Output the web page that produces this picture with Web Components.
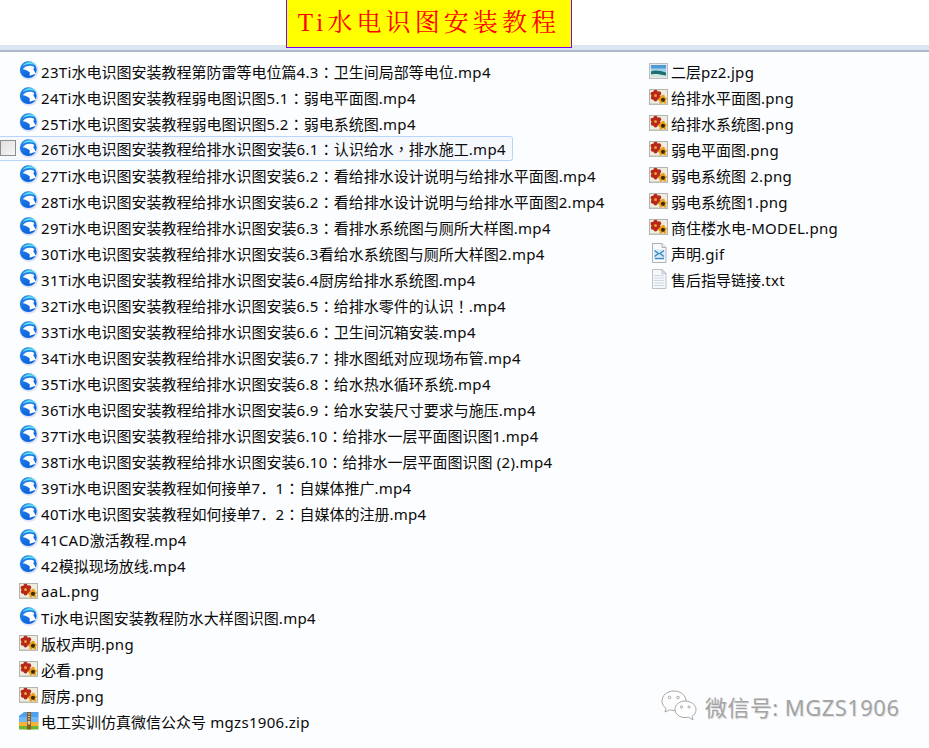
<!DOCTYPE html>
<html lang="zh"><head><meta charset="utf-8"><style>
html,body{margin:0;padding:0;background:#fcfdfe}
body{width:929px;height:748px;overflow:hidden;font-family:"Noto Sans","Noto Sans CJK SC",sans-serif}
.l{letter-spacing:.3px}
.p{font-family:"Noto Sans CJK TC",sans-serif}
</style></head><body>
<disk-page>
<title-bar slot="head">Ti水电识图安装教程</title-bar>
<file-row slot="left" type="video">23Ti水电识图安装教程第防雷等电位篇4.3：卫生间局部等电位.mp4</file-row>
<file-row slot="left" type="video">24Ti水电识图安装教程弱电图识图5.1：弱电平面图.mp4</file-row>
<file-row slot="left" type="video">25Ti水电识图安装教程弱电图识图5.2：弱电系统图.mp4</file-row>
<file-row slot="left" type="video" hover>26Ti水电识图安装教程给排水识图安装6.1：认识给水，排水施工.mp4</file-row>
<file-row slot="left" type="video">27Ti水电识图安装教程给排水识图安装6.2：看给排水设计说明与给排水平面图.mp4</file-row>
<file-row slot="left" type="video">28Ti水电识图安装教程给排水识图安装6.2：看给排水设计说明与给排水平面图2.mp4</file-row>
<file-row slot="left" type="video">29Ti水电识图安装教程给排水识图安装6.3：看排水系统图与厕所大样图.mp4</file-row>
<file-row slot="left" type="video">30Ti水电识图安装教程给排水识图安装6.3看给水系统图与厕所大样图2.mp4</file-row>
<file-row slot="left" type="video">31Ti水电识图安装教程给排水识图安装6.4厨房给排水系统图.mp4</file-row>
<file-row slot="left" type="video">32Ti水电识图安装教程给排水识图安装6.5：给排水零件的认识！.mp4</file-row>
<file-row slot="left" type="video">33Ti水电识图安装教程给排水识图安装6.6：卫生间沉箱安装.mp4</file-row>
<file-row slot="left" type="video">34Ti水电识图安装教程给排水识图安装6.7：排水图纸对应现场布管.mp4</file-row>
<file-row slot="left" type="video">35Ti水电识图安装教程给排水识图安装6.8：给水热水循环系统.mp4</file-row>
<file-row slot="left" type="video">36Ti水电识图安装教程给排水识图安装6.9：给水安装尺寸要求与施压.mp4</file-row>
<file-row slot="left" type="video">37Ti水电识图安装教程给排水识图安装6.10：给排水一层平面图识图1.mp4</file-row>
<file-row slot="left" type="video">38Ti水电识图安装教程给排水识图安装6.10：给排水一层平面图识图 (2).mp4</file-row>
<file-row slot="left" type="video">39Ti水电识图安装教程如何接单7．1：自媒体推广.mp4</file-row>
<file-row slot="left" type="video">40Ti水电识图安装教程如何接单7．2：自媒体的注册.mp4</file-row>
<file-row slot="left" type="video">41CAD激活教程.mp4</file-row>
<file-row slot="left" type="video">42模拟现场放线.mp4</file-row>
<file-row slot="left" type="png">aaL.png</file-row>
<file-row slot="left" type="video">Ti水电识图安装教程防水大样图识图.mp4</file-row>
<file-row slot="left" type="png">版权声明.png</file-row>
<file-row slot="left" type="png">必看.png</file-row>
<file-row slot="left" type="png">厨房.png</file-row>
<file-row slot="left" type="zip">电工实训仿真微信公众号 mgzs1906.zip</file-row>
<file-row slot="right" type="jpg">二层pz2.jpg</file-row>
<file-row slot="right" type="png">给排水平面图.png</file-row>
<file-row slot="right" type="png">给排水系统图.png</file-row>
<file-row slot="right" type="png">弱电平面图.png</file-row>
<file-row slot="right" type="png">弱电系统图 2.png</file-row>
<file-row slot="right" type="png">弱电系统图1.png</file-row>
<file-row slot="right" type="png">商住楼水电-MODEL.png</file-row>
<file-row slot="right" type="gif">声明.gif</file-row>
<file-row slot="right" type="txt">售后指导链接.txt</file-row>
<wx-mark slot="mark">微信号: MGZS1906</wx-mark>
</disk-page>
<script>
let gid=0;
const flower=`<g fill="#b8281a"><circle cx="6.500" cy="5" r="2.200"/><circle cx="3.500" cy="6.800" r="2"/><circle cx="10" cy="6.500" r="2.200"/><circle cx="3.800" cy="10.800" r="2"/><circle cx="9.500" cy="10.500" r="2.200"/><circle cx="6.500" cy="12.600" r="2"/><circle cx="6.500" cy="8.500" r="4"/></g><circle cx="6.500" cy="8.500" r="1.500" fill="#e8a030"/><g fill="#eda012"><circle cx="14" cy="9.800" r="2"/><circle cx="11.300" cy="12.300" r="2"/><circle cx="16.200" cy="12" r="1.700"/><circle cx="12" cy="15" r="1.600"/><circle cx="15.800" cy="15" r="1.600"/></g><circle cx="14" cy="12.800" r="2.100" fill="#3e2a08"/>`;
const ICONS={
video:()=>{const i="v"+(gid++);return `<svg width="20" height="20" viewBox="0 0 20 20"><defs><linearGradient id="${i}" x1="0" y1="0" x2=".4" y2="1"><stop offset="0" stop-color="#2f8ff0"/><stop offset="1" stop-color="#0a62dc"/></linearGradient></defs><circle cx="10" cy="9.500" r="9.500" fill="#dbe3f5"/><circle cx="9.300" cy="8.700" r="8.400" fill="url(#${i})"/><path d="M3.500 5C6 .8 12 0 16 3c.8.700 1.300 1.300 1.500 2.300C14 2.300 8 2.200 3.500 5Z" fill="#5fe3ea"/><path d="M3.800 8.200C6.500 4.200 12 3.700 15.300 6L14.300 8.300 17 12.700 10.600 14.700 10.800 11.500C9 9.400 6.200 8.500 3.800 8.200Z" fill="#fff"/></svg>`},
png:()=>`<svg width="20" height="20" viewBox="0 0 20 20"><rect x=".5" y="2.500" width="18" height="15" fill="#eeeddf" stroke="#b4b4ae"/><rect x="1" y="16.500" width="17" height="1.500" fill="#bdbdb4"/>${flower}</svg>`,
jpg:()=>`<svg width="20" height="20" viewBox="0 0 20 20"><rect x=".5" y="2.500" width="18" height="15" fill="#e6e8ea" stroke="#b9bcc0"/><rect x="2" y="4" width="15" height="12" fill="#9fd2ee"/><rect x="2" y="4" width="15" height="3.500" fill="#4f9ad0"/><path d="M2 10.500c4-2 9-1 15 1V16H2z" fill="#1e6f72"/><path d="M2 13.500c5-1 9 0 15 1V16H2z" fill="#cfe6e0"/></svg>`,
gif:()=>`<svg width="20" height="20" viewBox="0 0 20 20"><path d="M3.500 .5H13l4 4V19.500H3.500Z" fill="#f8fafc" stroke="#a9b2bc"/><path d="M13 .5V4.500H17" fill="#e4e9ef" stroke="#a9b2bc"/><rect x="5" y="6.500" width="10.500" height="10" fill="#d6e8f6"/><path d="M5.500 7.500l4 3-4 3M15 7.500l-4 3 4 3" fill="none" stroke="#3c8ac4" stroke-width="1.400"/><path d="M6 15.500h9" stroke="#3c8ac4" stroke-width="1.400"/></svg>`,
txt:()=>`<svg width="20" height="20" viewBox="0 0 20 20"><path d="M3.500 .5H13l4 4V19.500H3.500Z" fill="#f6f7f9" stroke="#bcc2ca"/><path d="M13 .5V4.500H17Z" fill="#dfe3e8" stroke="#bcc2ca"/><path d="M5 6.500h10M5 9h10M5 11.500h10M5 14h10M5 16.500h10" stroke="#ccd8e6"/></svg>`,
zip:()=>`<svg width="20" height="20" viewBox="0 0 20 20"><path d="M0 5 5 1H19.500V7H0Z" fill="#4ea1ef"/><path d="M0 6H19.500V12H0Z" fill="#72b6f4"/><path d="M0 11H19.500V15H0Z" fill="#f3b23a"/><path d="M0 15H19.500V18.500H0Z" fill="#6cb52e"/><rect x="8" y="1" width="4" height="17.500" fill="#8a5a22"/><path d="M9 3h2M9 5.500h2M9 8h2" stroke="#e8cf9a"/><rect x="8.800" y="10" width="2.400" height="3.500" fill="#e8cf9a"/></svg>`};

class DiskPage extends HTMLElement{constructor(){super();this.attachShadow({mode:"open"}).innerHTML=`<style>
:host{display:block;position:relative;width:929px;height:748px;overflow:hidden}
.head{display:flex;height:45px;padding-left:286px;background:#fff}
.band{height:5px;background:#dbe6f3;border-bottom:2px solid #adb7c9}
.cols{display:grid;grid-template-columns:630px 1fr;padding-top:6px}
.col{display:flex;flex-direction:column}
</style><div class="head"><slot name="head"></slot></div><div class="band"></div>
<div class="cols"><div class="col"><slot name="left"></slot></div><div class="col"><slot name="right"></slot></div></div><slot name="mark"></slot>`}}
class TitleBar extends HTMLElement{constructor(){super();this.attachShadow({mode:"open"}).innerHTML=`<style>
:host{display:block;box-sizing:border-box;width:286px;height:48px;background:#ff0;border:1px solid #7f00ff;border-top:0;color:#f00;font:25px/46px "Liberation Serif","Noto Serif CJK SC","Noto Sans CJK SC",serif;letter-spacing:4.1px;text-align:center;position:relative;z-index:1;white-space:nowrap}
</style><slot></slot>`}}
class FileRow extends HTMLElement{constructor(){super();const t=this.getAttribute("type");const h=this.hasAttribute("hover");this.attachShadow({mode:"open"}).innerHTML=`<style>
:host{display:flex;box-sizing:border-box;height:26px;align-items:center;color:#0a0a0a;font-size:15px;white-space:nowrap}
.in{display:flex;align-items:center;height:26px;box-sizing:border-box;padding-left:19px;position:relative}
:host([hover]) .in{height:25px;margin-top:-1px;padding-right:6px;background:#f5f9fe;border:1px solid #b8d6fb;border-left:0;border-radius:0 3px 3px 0}
svg{display:block;flex:none}
.ic{width:20px;height:20px;margin-right:2px;flex:none}
.cb{position:absolute;left:0;top:3px;width:16px;height:16px;box-sizing:border-box;border:1px solid #8d8d8d;background:linear-gradient(135deg,#dfdfdf,#f6f6f6)}
</style><div class="in">${h?'<span class="cb"></span>':''}<span class="ic">${ICONS[t]()}</span><span><slot></slot></span></div>`;
const s=this.textContent;this.textContent="";
for(const m of s.match(/[\x20-\x7e]+|[：，！]|[^\x20-\x7e：，！]+/g)){
 if(/^[\x20-\x7e]/.test(m)){const e=document.createElement("span");e.className="l";e.textContent=m;this.append(e)}
 else if(/^[：，！]/.test(m)){const e=document.createElement("span");e.className="p";e.lang="zh-Hant";e.textContent=m;this.append(e)}
 else this.append(m)}
}}
class WxMark extends HTMLElement{constructor(){super();this.attachShadow({mode:"open"}).innerHTML=`<style>
:host{position:absolute;left:661px;top:690px;display:flex;align-items:center;gap:8px;color:#a3a3a3;font-size:22px;line-height:32px;letter-spacing:.45px;white-space:nowrap;text-shadow:1px 1px 0 #e4e4e4}
</style><svg width="36" height="34" viewBox="0 0 36 34" fill="#fff" stroke="#a8a8a8" stroke-width="1"><path d="M13 1C6 1 1 5.500 1 11c0 3 1.500 5.500 4 7.300L4 22l4.500-2.200c1.500.4 3 .6 4.500.6 7 0 12-4 12-9.400S20 1 13 1Z"/><path d="M24 11c-5.500 0-10 3.700-10 8.300s4.500 8.300 10 8.300c1.200 0 2.400-.2 3.500-.5L32 30l-1-3.500c2.500-1.600 4-4.100 4-7.200C35 14.700 29.500 11 24 11Z"/><circle cx="8.500" cy="7.500" r="1.300"/><circle cx="17" cy="7.500" r="1.300"/><circle cx="20.500" cy="17" r="1.100"/><circle cx="28" cy="17" r="1.100"/></svg><span><slot></slot></span>`}}
customElements.define("disk-page",DiskPage);customElements.define("title-bar",TitleBar);customElements.define("file-row",FileRow);customElements.define("wx-mark",WxMark);
</script>
</body></html>
